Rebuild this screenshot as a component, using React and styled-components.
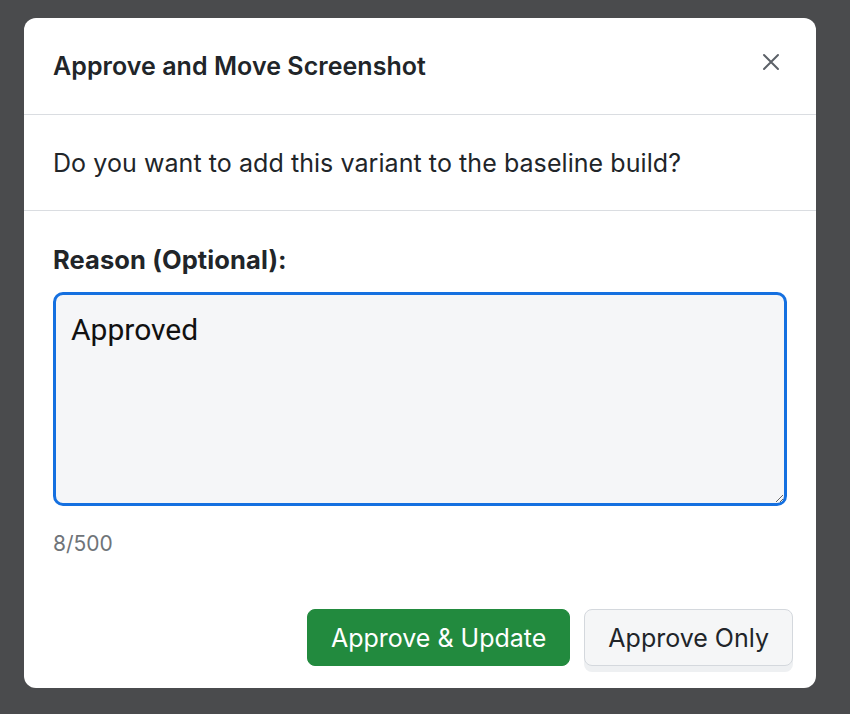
import React, { useEffect, useRef, useState } from 'react';
import styled, { createGlobalStyle } from 'styled-components';

const GlobalStyle = createGlobalStyle`
    html, body {
        margin: 0;
        padding: 0;
        width: 100%;
        height: 100%;
        overflow: hidden;
        font-family: Inter, "Noto Sans", sans-serif;
        background: #4a4b4d;
    }
    * {
        box-sizing: border-box;
    }
`;

function CloseIcon() {
    return (
        <svg width="18" height="18" viewBox="0 0 18 18" fill="none">
            <path d="M2 2L16 16M16 2L2 16" stroke="#5c6168" strokeWidth="2" strokeLinecap="round" />
        </svg>
    );
}

export default function App() {
    const [reason, setReason] = useState('Approved');
    const inputRef = useRef(null);

    // keep the caret at the end of the text, like a freshly typed field
    useEffect(() => {
        const el = inputRef.current;
        if (el) {
            el.focus();
            el.setSelectionRange(el.value.length, el.value.length);
        }
    }, []);

    return (
        <>
            <GlobalStyle />
            <Backdrop>
                <Dialog role="dialog" aria-labelledby="approve-title">
                    <Header>
                        <Title id="approve-title">Approve and Move Screenshot</Title>
                        <CloseButton aria-label="Close">
                            <CloseIcon />
                        </CloseButton>
                    </Header>

                    <Question>
                        <p>Do you want to add this variant to the baseline build?</p>
                    </Question>

                    <Form>
                        <Label htmlFor="reason">Reason (Optional):</Label>
                        <ReasonInput
                            id="reason"
                            ref={inputRef}
                            value={reason}
                            maxLength={500}
                            onChange={(e) => setReason(e.target.value)}
                        />
                        <Counter>{reason.length}/500</Counter>

                        <Actions>
                            <Button $variant="primary">Approve &amp; Update</Button>
                            <Button>Approve Only</Button>
                        </Actions>
                    </Form>
                </Dialog>
            </Backdrop>
        </>
    );
}

const Backdrop = styled.div`
    position: fixed;
    inset: 0;
    background: #4a4b4d;
    padding: 18px 34px 26px 24px;
    display: flex;
    align-items: flex-start;
`;

const Dialog = styled.div`
    width: 792px;
    height: 670px;
    background: #ffffff;
    border-radius: 12px;
    display: flex;
    flex-direction: column;
    color: #212529;
`;

const Header = styled.div`
    height: 97px;
    padding: 0 34px 0 29px;
    display: flex;
    align-items: center;
    justify-content: space-between;
    border-bottom: 1px solid #dadde1;
`;

const Title = styled.h2`
    margin: 0;
    font-size: 25px;
    font-weight: 600;
    letter-spacing: 0.05px;
    color: #212529;
`;

const CloseButton = styled.button`
    border: none;
    background: none;
    padding: 0;
    width: 22px;
    height: 22px;
    display: flex;
    align-items: center;
    justify-content: center;
    cursor: pointer;
    margin-top: -8px;
`;

const Question = styled.div`
    height: 96px;
    padding: 0 29px;
    display: flex;
    align-items: center;
    border-bottom: 1px solid #dadde1;

    p {
        margin: 0;
        font-size: 25px;
        font-weight: 400;
        letter-spacing: 0.07px;
        color: #212529;
    }
`;

const Form = styled.div`
    flex: 1;
    padding: 34px 23px 22px 29px;
    display: flex;
    flex-direction: column;
`;

const Label = styled.label`
    font-size: 25.5px;
    font-weight: 700;
    letter-spacing: 0.1px;
    color: #212529;
    line-height: 30px;
    margin-bottom: 17px;
`;

const ReasonInput = styled.textarea`
    width: 734px;
    height: 214px;
    border: 3px solid #1570e0;
    border-radius: 10px;
    background: #f5f6f8;
    padding: 17px 15px;
    font-family: Roboto, "Liberation Sans", sans-serif;
    font-size: 30px;
    line-height: 36px;
    color: #111;
    caret-color: #111;
    outline: none;
    resize: vertical;
`;

const Counter = styled.div`
    margin-top: 25px;
    font-size: 21px;
    color: #6f7479;
    line-height: 26px;
`;

const Actions = styled.div`
    margin-top: auto;
    display: flex;
    justify-content: flex-end;
    gap: 14px;
`;

const Button = styled.button`
    height: 57px;
    padding: 0 23px;
    border-radius: 8px;
    font-family: Inter, "Noto Sans", sans-serif;
    font-size: 25px;
    font-weight: 400;
    cursor: pointer;
    border: 1px solid ${(p) => (p.$variant === 'primary' ? '#228a3e' : '#d4d8dd')};
    background: ${(p) => (p.$variant === 'primary' ? '#228a3e' : '#f5f6f7')};
    color: ${(p) => (p.$variant === 'primary' ? '#ffffff' : '#212529')};
    box-shadow: ${(p) => (p.$variant === 'primary' ? 'none' : '0 6px 0 #eef0f2')};
`;
